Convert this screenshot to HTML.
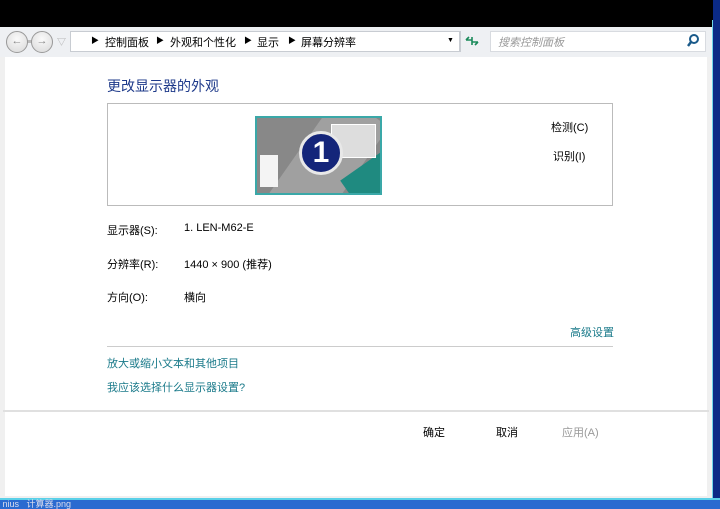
<!DOCTYPE html>
<html><head><meta charset="utf-8"><style>
*{margin:0;padding:0;box-sizing:border-box}
body{width:720px;height:509px;overflow:hidden;background:#000;position:relative;font-family:"Liberation Sans","Noto Sans CJK SC",sans-serif;font-size:11px;color:#000}
.a{position:absolute}
.link{color:#1a7a8a}
.circ{width:22px;height:22px;border-radius:50%;border:1px solid #999;background:radial-gradient(circle at 50% 35%,#fafafa,#d8d8d8);color:#888;font-size:11px;text-align:center;line-height:19px}
</style></head><body>
<div class="a" style="left:713px;top:0;width:7px;height:509px;background:#0b2a86"></div>
<div class="a" style="left:712px;top:20px;width:1px;height:480px;background:#6fd6e8"></div>
<div class="a" style="left:0;top:27px;width:712px;height:473px;background:#f0f0f0"></div>
<!-- toolbar -->
<div class="a" style="left:0;top:27px;width:712px;height:30px;background:#eef0f3"></div>
<div class="a" style="left:20px;top:40px;width:20px;height:3px;background:#bbb"></div>
<div class="a circ" style="left:6px;top:31px">←</div>
<div class="a circ" style="left:31px;top:31px">→</div>
<div class="a" style="left:57px;top:35px;color:#aaa;font-size:9px">▽</div>
<div class="a" style="left:70px;top:31px;width:390px;height:21px;background:#fff;border:1px solid #c8ccd2"></div>
<div class="a" style="left:91px;top:34px;font-size:8px;line-height:14px">▶</div>
<div class="a" style="left:105px;top:34px">控制面板</div>
<div class="a" style="left:156px;top:34px;font-size:8px;line-height:14px">▶</div>
<div class="a" style="left:170px;top:34px">外观和个性化</div>
<div class="a" style="left:244px;top:34px;font-size:8px;line-height:14px">▶</div>
<div class="a" style="left:257px;top:34px">显示</div>
<div class="a" style="left:288px;top:34px;font-size:8px;line-height:14px">▶</div>
<div class="a" style="left:301px;top:34px">屏幕分辨率</div>
<div class="a" style="left:447px;top:37px;font-size:7px">▼</div>
<div class="a" style="left:460px;top:31px;width:1px;height:21px;background:#c8ccd2"></div>
<svg class="a" style="left:464px;top:34px" width="16" height="14" viewBox="0 0 16 14"><path d="M2 6 L8 6 M2 6 L5 3 M14 8 L8 8 M14 8 L11 11 M8 3 L8 11" stroke="#1a8a5a" stroke-width="1.6" fill="none"/></svg>
<div class="a" style="left:490px;top:31px;width:216px;height:21px;background:#fff;border:1px solid #d8dbe0"></div>
<div class="a" style="left:498px;top:34px;color:#999;font-style:italic">搜索控制面板</div>
<svg class="a" style="left:686px;top:33px" width="14" height="15" viewBox="0 0 14 15"><circle cx="8" cy="6" r="4" stroke="#1a5a8a" stroke-width="2" fill="none"/><path d="M5 9 L2 13" stroke="#1a5a8a" stroke-width="2.4"/></svg>
<!-- content -->
<div class="a" style="left:5px;top:57px;width:702px;height:353px;background:#fff"></div>
<div class="a" style="left:107px;top:76px;font-size:14px;color:#1e3a8a">更改显示器的外观</div>
<div class="a" style="left:107px;top:103px;width:506px;height:103px;border:1px solid #bbb;background:#fff"></div>
<div class="a" style="left:255px;top:116px;width:127px;height:79px;background:#3aa8a8;padding:2px">
 <div style="position:relative;width:123px;height:75px;background:#888;overflow:hidden">
  <div class="a" style="left:40px;top:-20px;width:60px;height:130px;background:#a0a0a0;transform:rotate(35deg)"></div>
  <div class="a" style="left:95px;top:40px;width:60px;height:60px;background:#1f8a80;transform:rotate(-35deg)"></div>
  <div class="a" style="left:74px;top:6px;width:45px;height:34px;background:#ddd;border:1px solid #fff"></div>
  <div class="a" style="left:3px;top:37px;width:18px;height:32px;background:#f4f4f4"></div>
  <div class="a" style="left:42px;top:13px;width:44px;height:44px;border-radius:50%;background:#14257a;border:3px solid #e8e8e8;color:#fff;font-size:30px;font-weight:bold;text-align:center;line-height:38px">1</div>
 </div>
</div>
<div class="a" style="left:551px;top:119px">检测(C)</div>
<div class="a" style="left:553px;top:148px">识别(I)</div>
<div class="a" style="left:107px;top:222px">显示器(S):</div>
<div class="a" style="left:184px;top:222px">1. LEN-M62-E</div>
<div class="a" style="left:107px;top:256px">分辨率(R):</div>
<div class="a" style="left:184px;top:256px">1440 × 900 (推荐)</div>
<div class="a" style="left:107px;top:289px">方向(O):</div>
<div class="a" style="left:184px;top:289px">横向</div>
<div class="a link" style="left:570px;top:324px">高级设置</div>
<div class="a" style="left:107px;top:346px;width:506px;height:1px;background:#ccc"></div>
<div class="a link" style="left:107px;top:355px">放大或缩小文本和其他项目</div>
<div class="a link" style="left:107px;top:379px">我应该选择什么显示器设置?</div>
<!-- footer -->
<div class="a" style="left:3px;top:410px;width:706px;height:2px;background:#e0e0e0"></div>
<div class="a" style="left:5px;top:412px;width:702px;height:84px;background:#fff"></div>
<div class="a" style="left:423px;top:424px">确定</div>
<div class="a" style="left:496px;top:424px">取消</div>
<div class="a" style="left:562px;top:424px;color:#999">应用(A)</div>
<div class="a" style="left:0;top:498px;width:720px;height:2px;background:#5ad0e8"></div>
<!-- taskbar -->
<div class="a" style="left:0;top:500px;width:720px;height:9px;background:#2a6ad0;color:#dde;font-size:9px;line-height:9px;white-space:nowrap">&nbsp;nius &nbsp; 计算器.png</div>
</body></html>
